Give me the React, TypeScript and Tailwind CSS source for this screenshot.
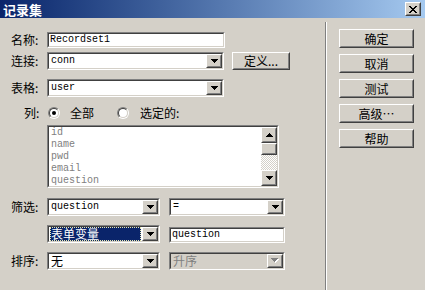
import React from "react";

const cjk = "font-['Noto_Sans_CJK_SC','Noto_Sans',sans-serif]";
const mono = "font-['Liberation_Mono',monospace]";

const sunkenOuter =
  "border border-t-[#808080] border-l-[#808080] border-b-white border-r-white";
const sunkenInner =
  "border border-t-[#404040] border-l-[#404040] border-b-[#d4d0c8] border-r-[#d4d0c8]";
const raisedOuter =
  "border border-t-white border-l-white border-b-[#404040] border-r-[#404040]";
const raisedInner =
  "border border-t-[#d4d0c8] border-l-[#d4d0c8] border-b-[#808080] border-r-[#808080]";

const Arrow = ({ up = false, color = "#000" }: { up?: boolean; color?: string }) => (
  <svg width="7" height="4" shapeRendering="crispEdges" className={up ? "rotate-180" : ""}>
    <path d="M0 0h7v1H0zM1 1h5v1H1zM2 2h3v1H2zM3 3h1v1H3z" fill={color} />
  </svg>
);

const DisabledArrow = () => (
  <div className="relative w-[8px] h-[5px]">
    <div className="absolute left-[1px] top-[1px]">
      <Arrow color="#ffffff" />
    </div>
    <div className="absolute left-0 top-0">
      <Arrow color="#808080" />
    </div>
  </div>
);

const Raised = ({
  className = "",
  children,
}: {
  className?: string;
  children?: React.ReactNode;
}) => (
  <div className={`${raisedOuter} bg-[#d4d0c8] ${className}`}>
    <div className={`${raisedInner} w-full h-full flex items-center justify-center`}>
      {children}
    </div>
  </div>
);

const Combo = ({
  w,
  text,
  isMono = false,
  selected = false,
  disabled = false,
}: {
  w: string;
  text: string;
  isMono?: boolean;
  selected?: boolean;
  disabled?: boolean;
}) => (
  <div className={`${sunkenOuter} ${w} h-[18px]`}>
    <div className={`${sunkenInner} h-full flex`}>
      <div
        className={`flex-1 flex items-center px-[1px] ${
          disabled ? "bg-[#d4d0c8]" : "bg-white"
        }`}
      >
        <div
          className={`h-full w-full flex items-center pl-[1px] ${
            selected
              ? "bg-[#0a246a] text-white outline-1 outline-dotted outline-[#e8e8b0] -outline-offset-1"
              : disabled
              ? "text-[#808080]"
              : "text-black"
          } ${isMono ? `${mono} text-[10px]` : `${cjk} text-[12px]`}`}
        >
          <span className="leading-none">{text}</span>
        </div>
      </div>
      <Raised className="w-[16px] h-full">
        {disabled ? <DisabledArrow /> : <Arrow />}
      </Raised>
    </div>
  </div>
);

const TextInput = ({ w, text }: { w: string; text: string }) => (
  <div className={`${sunkenOuter} ${w} h-[16px]`}>
    <div className={`${sunkenInner} h-full bg-white flex items-center pl-[1px]`}>
      <span className={`${mono} text-[10px] leading-none`}>{text}</span>
    </div>
  </div>
);

const Radio = ({ checked = false }: { checked?: boolean }) => (
  <div className="w-[12px] h-[12px] rounded-full border border-t-[#808080] border-l-[#808080] border-b-white border-r-white">
    <div className="w-full h-full rounded-full border border-t-[#404040] border-l-[#404040] border-b-[#d4d0c8] border-r-[#d4d0c8] bg-white flex items-center justify-center">
      {checked && <div className="w-[4px] h-[4px] rounded-full bg-black" />}
    </div>
  </div>
);

const Label = ({ text }: { text: string }) => (
  <div className="w-[36px] leading-none">{text}</div>
);

const columns = ["id", "name", "pwd", "email", "question"];
const buttons = ["确定", "取消", "测试", "高级…", "帮助"];

export default function App() {
  return (
    <div
      className={`w-[425px] h-[290px] bg-[#d4d0c8] flex flex-col overflow-hidden text-[12px] text-black ${cjk}`}
    >
      {/* title bar */}
      <div className="h-[18px] shrink-0 bg-linear-to-r from-[#0a246a] to-[#a6caf0] flex items-center justify-between pl-[3px] pr-[4px]">
        <span className="text-white font-bold text-[13px] leading-none">记录集</span>
        <Raised className="w-[16px] h-[14px]">
          <svg width="8" height="7" shapeRendering="crispEdges">
            <path
              d="M0 0h2v1H0zM6 0h2v1H6zM1 1h2v1H1zM5 1h2v1H5zM2 2h4v1H2zM3 3h2v1H3zM2 4h4v1H2zM1 5h2v1H1zM5 5h2v1H5zM0 6h2v1H0zM6 6h2v1H6z"
              fill="#000"
            />
          </svg>
        </Raised>
      </div>

      <div className="flex flex-1">
        {/* left form */}
        <div className="w-[325px] pl-[11px]">
          <div className="mt-[14px] h-[16px] flex items-center">
            <Label text="名称:" />
            <TextInput w="w-[178px]" text="Recordset1" />
          </div>

          <div className="mt-[4px] h-[18px] flex items-center">
            <Label text="连接:" />
            <Combo w="w-[177px]" text="conn" isMono />
            <Raised className="ml-[8px] w-[58px] h-[18px]">
              <span className="leading-none">定义...</span>
            </Raised>
          </div>

          <div className="mt-[9px] h-[18px] flex items-center">
            <Label text="表格:" />
            <Combo w="w-[177px]" text="user" isMono />
          </div>

          <div className="mt-[9px] h-[14px] flex items-center">
            <div className="w-[37px] pl-[13px] leading-none">列:</div>
            <Radio checked />
            <span className="ml-[10px] leading-none">全部</span>
            <div className="ml-[23px]">
              <Radio />
            </div>
            <span className="ml-[11px] leading-none">选定的:</span>
          </div>

          <div className={`mt-[5px] ml-[36px] w-[232px] h-[63px] ${sunkenOuter}`}>
            <div className={`${sunkenInner} h-full flex`}>
              <div className="flex-1 bg-white pl-[2px] overflow-hidden">
                {columns.map((c) => (
                  <div
                    key={c}
                    className={`${mono} text-[10px] leading-[12px] text-[#808080]`}
                  >
                    {c}
                  </div>
                ))}
              </div>
              <div className="w-[16px] flex flex-col">
                <Raised className="w-[16px] h-[16px]">
                  <Arrow up />
                </Raised>
                <Raised className="w-[16px] h-[12px]" />
                <div className="flex-1 bg-[repeating-conic-gradient(#ffffff_0_25%,#d4d0c8_0_50%)] bg-size-[2px_2px]" />
                <Raised className="w-[16px] h-[16px]">
                  <Arrow />
                </Raised>
              </div>
            </div>
          </div>

          <div className="mt-[9px] h-[19px] flex items-center">
            <Label text="筛选:" />
            <Combo w="w-[113px]" text="question" isMono />
            <div className="ml-[9px]">
              <Combo w="w-[116px]" text="=" isMono />
            </div>
          </div>

          <div className="mt-[8px] h-[19px] flex items-end">
            <div className="w-[36px]" />
            <Combo w="w-[113px]" text="表单变量" selected />
            <div className="ml-[9px]">
              <TextInput w="w-[116px]" text="question" />
            </div>
          </div>

          <div className="mt-[8px] h-[19px] flex items-center">
            <Label text="排序:" />
            <Combo w="w-[113px]" text="无" />
            <div className="ml-[9px]">
              <Combo w="w-[116px]" text="升序" disabled />
            </div>
          </div>
        </div>

        {/* separator */}
        <div className="w-[2px] mt-[4px] border-l border-l-[#808080] border-r border-r-white" />

        {/* buttons */}
        <div className="pl-[12px] pt-[11px] flex flex-col gap-[6px]">
          {buttons.map((b) => (
            <Raised key={b} className="w-[75px] h-[19px]">
              <span className="leading-none">{b}</span>
            </Raised>
          ))}
        </div>
      </div>
    </div>
  );
}
